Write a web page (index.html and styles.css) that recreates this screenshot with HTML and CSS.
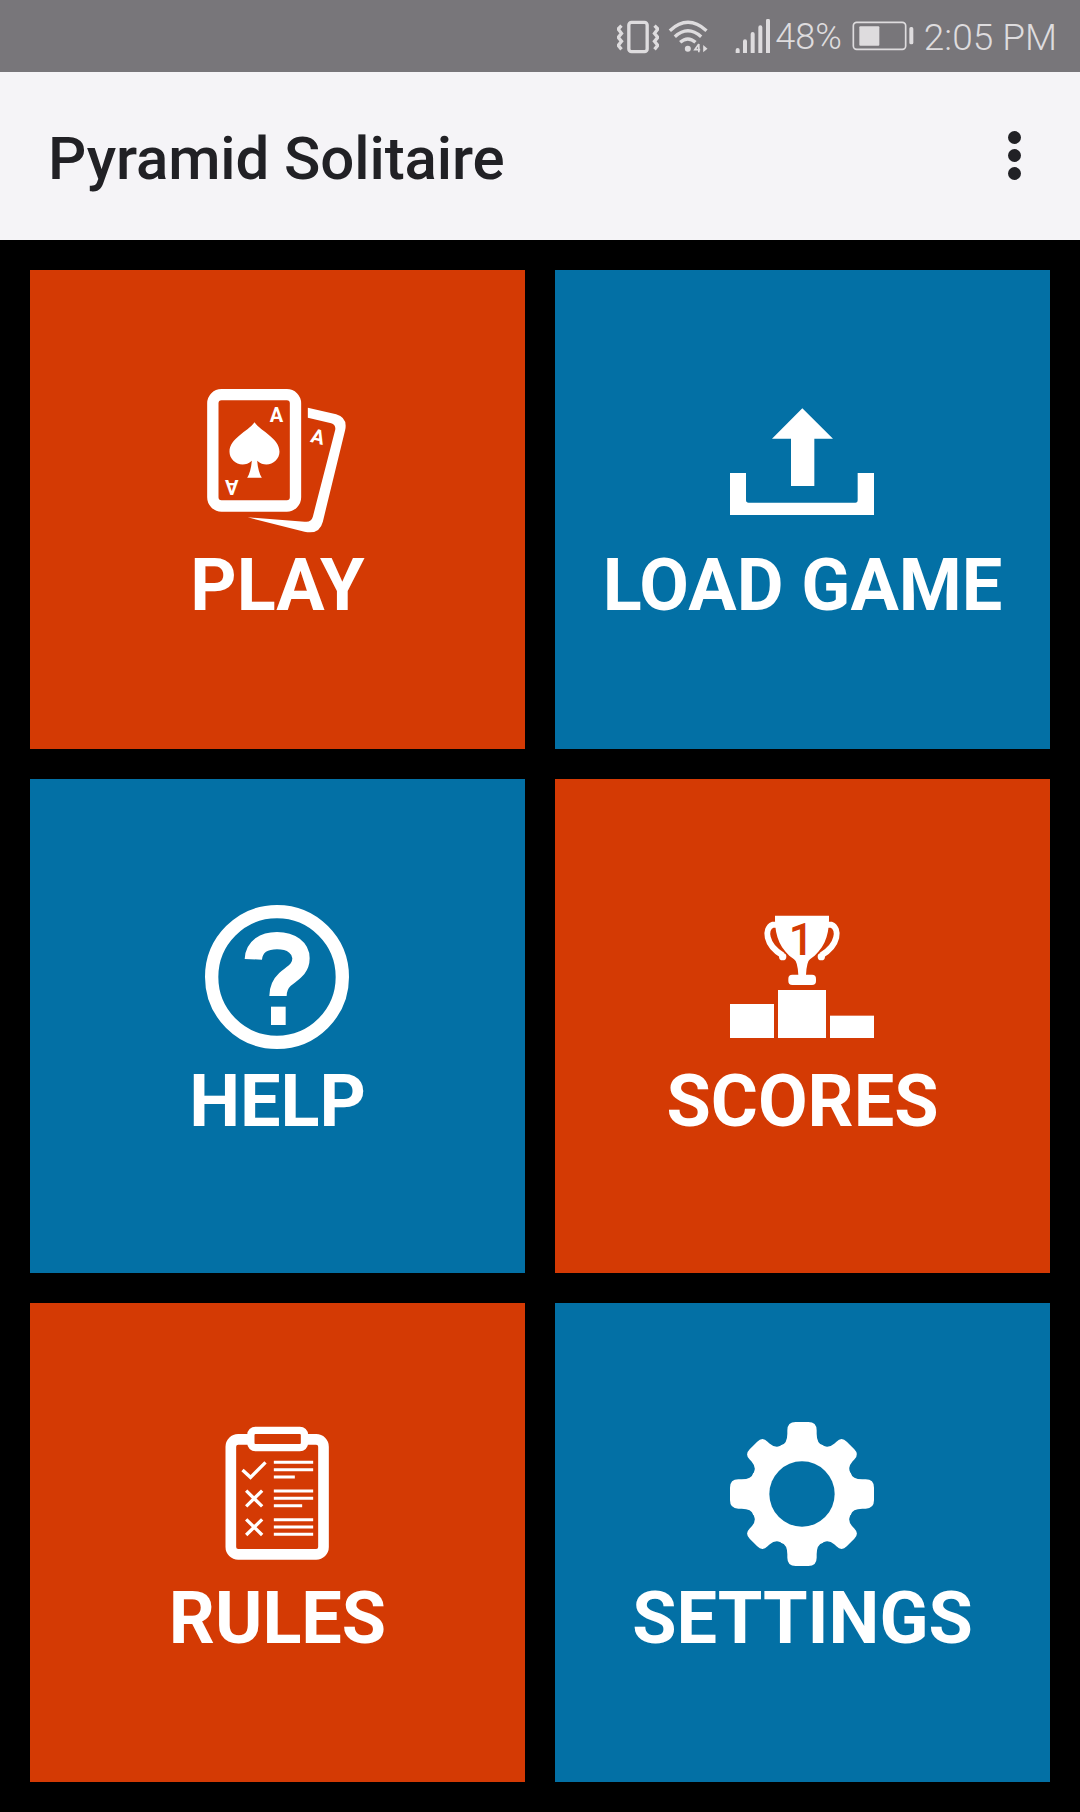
FILE: index.html
```html
<!DOCTYPE html>
<html lang="en">
<head>
  <meta charset="UTF-8">
  <meta name="viewport" content="width=device-width, initial-scale=1.0">
  <title>Pyramid Solitaire</title>
  <link rel="stylesheet" href="styles.css">
</head>
<body>
  <div class="status-bar">
    <!-- vibrate -->
    <svg class="status-icon vibrate" viewBox="55 55 125 105">
      <rect x="90" y="65" width="55" height="88" rx="8"/>
      <path d="M68 75 L58 85 L68 98 L58 110 L68 122 L58 134 L68 146"/>
      <path d="M167 75 L177 85 L167 98 L177 110 L167 122 L177 134 L167 146"/>
    </svg>
    <!-- wifi -->
    <svg class="status-icon wifi" viewBox="208 55 122 105">
      <path d="M213 90 Q267 40 323 90"/>
      <path d="M228 108 Q267 72 307 108"/>
      <path d="M244 125 Q267 105 290 125"/>
      <circle class="solid" cx="267" cy="144" r="9"/>
      <path class="thin" d="M300 130 L288 147 H304 M300 130 V155"/>
      <path class="solid" d="M313 133 L326 144 L313 155 Z"/>
    </svg>
    <!-- signal bars -->
    <svg class="status-icon signal" viewBox="408 55 108 102">
      <path class="bars" d="M416 148 V155 M438 122 V155 M461 100 V155 M484 80 V155 M507 60 V155"/>
    </svg>
    <span class="status-text percent">48%</span>
    <!-- battery -->
    <svg class="status-icon battery" viewBox="756 62 186 90">
      <rect class="thin" x="760" y="66" width="157" height="81" rx="10"/>
      <rect class="solid" x="778" y="78" width="60" height="58" rx="3"/>
      <rect class="solid" x="928" y="80" width="12" height="52" rx="5"/>
    </svg>
    <span class="status-text clock">2:05 PM</span>
  </div>

  <header class="app-bar">
    <h1 class="app-title">Pyramid Solitaire</h1>
    <div class="overflow-menu">
      <span class="dot"></span>
      <span class="dot"></span>
      <span class="dot"></span>
    </div>
  </header>

  <main class="menu-grid">
    <a class="tile tile-red">
      <svg class="tile-icon" viewBox="76.5 57 432 432">
        <path d="M385 113 L470 133 Q505 143 497 180 L430 455 Q420 495 375 485 L205 442 L375 455 Q395 458 400 440 L467 180 Q470 165 455 160 L385 143 Z"/>
        <rect class="outline" x="100" y="74" width="248" height="334" rx="26"/>
        <path d="M225 157 C245 185 300 205 300 245 C300 275 262 298 233 272 C235 295 240 312 247 323 H203 C210 312 215 295 217 272 C188 298 150 275 150 245 C150 205 205 185 225 157 Z"/>
        <text class="pip" x="291" y="156" text-anchor="middle">A</text>
        <text class="pip" x="157" y="371" text-anchor="middle" transform="rotate(180 157 350)">A</text>
        <text class="pip" x="415" y="221" text-anchor="middle" transform="rotate(14 415 203)">A</text>
      </svg>
      <span class="tile-label">PLAY</span>
    </a>

    <a class="tile tile-blue">
      <svg class="tile-icon" viewBox="60 -3 432 432">
        <path d="M277 55 L369 146 H313 V288 H243 V146 H186 Z"/>
        <path d="M60 249 H108 V330 Q108 338 116 338 H436 Q443 338 443 330 V249 H492 V375 H60 Z"/>
      </svg>
      <span class="tile-label">LOAD GAME</span>
    </a>

    <a class="tile tile-blue">
      <svg class="tile-icon" viewBox="45 45 432 432">
        <circle class="ring" cx="261" cy="261" r="196"/>
        <path class="hook" d="M190 208 C192 170 222 152 261 152 C305 152 333 175 333 205 C333 240 305 250 285 268 C270 282 264 295 264 318"/>
        <rect x="243" y="350" width="44" height="55"/>
      </svg>
      <span class="tile-label">HELP</span>
    </a>

    <a class="tile tile-red">
      <svg class="tile-icon" viewBox="60 15 432 432">
        <path class="handle" d="M200 74 H188 C162 85 165 135 218 166"/>
        <path class="handle" d="M352 74 H364 C390 85 387 135 334 166"/>
        <circle cx="218" cy="170" r="11"/>
        <circle cx="334" cy="170" r="11"/>
        <path d="M195 47 H357 V60 C357 110 340 150 300 178 Q290 185 288 225 H265 Q263 185 252 178 C212 150 195 110 195 60 Z"/>
        <rect x="235" y="224" width="83" height="31" rx="12"/>
        <text class="place" x="274" y="164" text-anchor="middle">1</text>
        <rect x="60" y="312" width="132" height="102"/>
        <rect x="204" y="270" width="144" height="144"/>
        <rect x="360" y="347" width="132" height="67"/>
      </svg>
      <span class="tile-label">SCORES</span>
    </a>

    <a class="tile tile-red">
      <svg class="tile-icon" viewBox="-16.5 39 432 432">
        <rect class="board" x="61" y="91" width="278" height="345" rx="22"/>
        <rect class="clip" x="121" y="64" width="161" height="52" rx="14"/>
        <path class="mark" d="M96 183 L120 205 L165 160"/>
        <path class="mark" d="M107 245 L155 292 M155 245 L107 292"/>
        <path class="mark" d="M107 331 L155 378 M155 331 L107 378"/>
        <path class="rule" d="M190 160 H308 M190 182 H308 M190 204 H253"/>
        <path class="rule" d="M190 246 H308 M190 268 H308 M190 290 H275"/>
        <path class="rule" d="M190 332 H308 M190 354 H308 M190 376 H308"/>
      </svg>
      <span class="tile-label">RULES</span>
    </a>

    <a class="tile tile-blue">
      <svg class="tile-icon" viewBox="60 65 432 432">
        <defs>
          <path id="tooth-long" d="M276 281 L213 135 Q232 130 232 100 V90 Q232 65 257 65 H295 Q320 65 320 90 V100 Q320 130 339 135 Z"/>
          <path id="tooth-short" d="M276 281 L213 135 Q236 132 238 105 V97 Q238 75 260 75 H292 Q314 75 314 97 V105 Q316 132 339 135 Z"/>
        </defs>
        <circle cx="276" cy="281" r="158"/>
        <use href="#tooth-long"/>
        <use href="#tooth-long" transform="rotate(90 276 281)"/>
        <use href="#tooth-long" transform="rotate(180 276 281)"/>
        <use href="#tooth-long" transform="rotate(270 276 281)"/>
        <use href="#tooth-short" transform="rotate(45 276 281)"/>
        <use href="#tooth-short" transform="rotate(135 276 281)"/>
        <use href="#tooth-short" transform="rotate(225 276 281)"/>
        <use href="#tooth-short" transform="rotate(315 276 281)"/>
        <circle class="cut" cx="276" cy="281" r="98"/>
      </svg>
      <span class="tile-label">SETTINGS</span>
    </a>
  </main>
</body>
</html>
```

FILE: styles.css
```css
* {
  box-sizing: border-box;
}

body {
  margin: 0;
  min-height: 100vh;
  background-color: #000;
  font-family: Roboto, "Liberation Sans", sans-serif;
}

/* status bar */
.status-bar {
  display: flex;
  align-items: center;
  height: 72px;
  padding-right: 23px;
  justify-content: flex-end;
  background-color: #78767a;
  color: #dedcde;
}

.status-icon {
  display: block;
  flex-shrink: 0;
  fill: none;
  stroke: #dedcde;
  stroke-width: 10;
}

.status-icon .solid {
  fill: #dedcde;
  stroke: none;
}

.status-icon .thin {
  stroke-width: 5;
}

.status-icon .bars {
  stroke-width: 12;
  stroke-linecap: round;
}

.vibrate {
  width: 42px;
  height: 35px;
}

.wifi {
  width: 41px;
  height: 35px;
  margin-left: 9px;
}

.signal {
  width: 36px;
  height: 34px;
  margin-left: 26px;
}

.battery {
  width: 62px;
  height: 30px;
  margin-left: 10px;
}

.status-text {
  margin-top: 2px;
  font-size: 36px;
  font-weight: 300;
  line-height: 1;
}

.percent {
  margin-left: 4px;
}

.clock {
  margin-left: 10px;
  font-size: 37px;
}

/* app bar */
.app-bar {
  display: flex;
  align-items: center;
  justify-content: space-between;
  height: 168px;
  padding: 0 48px;
  background-color: #f5f4f7;
}

.app-title {
  margin: 4px 0 0;
  font-size: 60px;
  font-weight: 500;
  letter-spacing: -0.1px;
  color: #212125;
}

.overflow-menu {
  display: flex;
  flex-direction: column;
  gap: 5px;
  margin-right: 11px;
  margin-top: -2px;
}

.dot {
  width: 13px;
  height: 13px;
  border-radius: 50%;
  background-color: #212125;
}

/* tiles */
.menu-grid {
  display: grid;
  grid-template-columns: 495px 495px;
  grid-template-rows: 479px 494px 479px;
  gap: 30px;
  padding: 30px;
}

.tile {
  display: flex;
  flex-direction: column;
  align-items: center;
  justify-content: center;
  padding-bottom: 9px;
  color: #fff;
}

.tile-red {
  background-color: #d43a04;
}

.tile-blue {
  background-color: #0370a5;
}

.tile-icon {
  display: block;
  width: 144px;
  height: 144px;
  margin-right: 1px;
  fill: #fff;
}

.tile-label {
  margin-top: 17px;
  font-size: 72px;
  font-weight: 700;
  line-height: 1;
}

.tile-icon .outline {
  fill: none;
  stroke: #fff;
  stroke-width: 34;
}

.pip {
  font-family: Roboto, "Liberation Sans", sans-serif;
  font-size: 60px;
  font-weight: 700;
}

.place {
  font-family: Roboto, "Liberation Sans", sans-serif;
  font-size: 132px;
  font-weight: 500;
  fill: #d43a04;
}

.ring {
  fill: none;
  stroke: #fff;
  stroke-width: 40;
}

.hook {
  fill: none;
  stroke: #fff;
  stroke-width: 52;
}

.handle {
  fill: none;
  stroke: #fff;
  stroke-width: 18;
}

.board {
  fill: none;
  stroke: #fff;
  stroke-width: 32;
}

.clip {
  fill: #d43a04;
  stroke: #fff;
  stroke-width: 22;
}

.mark {
  fill: none;
  stroke: #fff;
  stroke-width: 10;
}

.rule {
  fill: none;
  stroke: #fff;
  stroke-width: 9;
}

.cut {
  fill: #0370a5;
}
```
